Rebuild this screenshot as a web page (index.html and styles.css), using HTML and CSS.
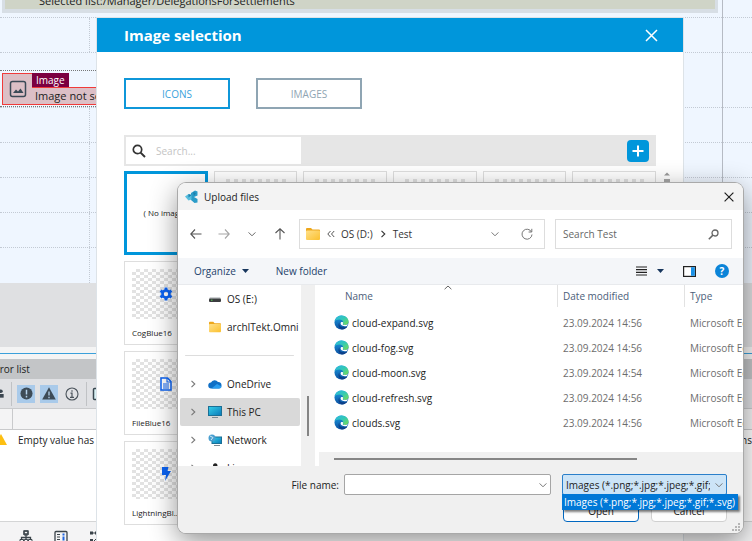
FILE: index.html
```html
<!DOCTYPE html>
<html lang="en">
<head>
    <meta charset="UTF-8">
    <meta name="viewport" content="width=device-width, initial-scale=1">
    <title>Image selection</title>
    <link rel="stylesheet" href="styles.css">
</head>
<body>
    <svg class="defs" width="0" height="0" aria-hidden="true">
        <defs>
            <linearGradient id="edgeBlue" x1="0" y1="0" x2="0" y2="1">
                <stop offset="0" stop-color="#1b9de2"/>
                <stop offset="1" stop-color="#0c4fa0"/>
            </linearGradient>
            <linearGradient id="edgeGreen" x1="0" y1="0" x2="1" y2="1">
                <stop offset="0" stop-color="#28b5e4"/>
                <stop offset="0.5" stop-color="#35c9b4"/>
                <stop offset="1" stop-color="#7be04a"/>
            </linearGradient>
            <linearGradient id="folderFill" x1="0" y1="0" x2="1" y2="1">
                <stop offset="0" stop-color="#ffe08a"/>
                <stop offset="1" stop-color="#fbc02e"/>
            </linearGradient>
            <linearGradient id="screenFill" x1="0" y1="0" x2="1" y2="1">
                <stop offset="0" stop-color="#35d0ea"/>
                <stop offset="1" stop-color="#0a78b8"/>
            </linearGradient>
            <symbol id="edge" viewBox="0 0 16 16">
                <circle cx="8" cy="8" r="7.5" fill="url(#edgeBlue)"/>
                <path d="M.7 6.500C1.600 2.500 4.500.5 8 .5c4.500 0 7.500 3.200 7.500 6.500 0 2.400-1.700 3.700-3.700 3.700-1.500 0-2.600-.5-2.600-1 0-.4.6-.8.6-1.900C9.800 6 8.200 4.700 5.700 4.700 3.500 4.700 1.600 5.500.7 6.500z" fill="url(#edgeGreen)"/>
                <path d="M5.800 8c-.8 3.600 2 6.800 8.500 4.300-1 1.700-3.200 3.100-5.200 3.200C5.500 14.800 3.500 11 5.800 8z" fill="#0b3f88"/>
                <path d="M7.300 8c.8-.9 2.400-.6 2.500.3 0 .6-.5 1-.5 1.400 0 .6 1.200 1 2.500 1 1.200 0 2.200-.4 3-1.100-.2.900-.6 1.500-1 2C9.500 12.800 6.200 10.500 7.300 8z" fill="#fff"/>
            </symbol>
            <symbol id="folder" viewBox="0 0 16 14">
                <path d="M1 2a1 1 0 0 1 1-1h4l1.500 1.500H14a1 1 0 0 1 1 1V6H1z" fill="#eda71c"/>
                <rect x="1" y="3.500" width="14" height="9.500" rx="1" fill="url(#folderFill)"/>
            </symbol>
            <symbol id="chevron-right" viewBox="0 0 8 8">
                <path d="M2.500 .8L5.800 4 2.500 7.200" fill="none" stroke="currentColor" stroke-width="1.100"/>
            </symbol>
            <symbol id="chevron-down" viewBox="0 0 8 8">
                <path d="M.6 2.400L4 5.800l3.400-3.400" fill="none" stroke="currentColor"/>
            </symbol>
        </defs>
    </svg>

    <div class="designer">
        <div class="canvas">
            <div class="sheet">
                <div class="list-block">
                    <div class="list-caption">Selected list:/Manager/DelegationsForSettlements</div>
                </div>
                <div class="grid-row thin"></div>
                <div class="grid-row"><i></i><i></i><i></i></div>
                <div class="grid-row component-row">
                    <div class="image-component">
                        <div class="image-thumb">
                            <svg width="18" height="18" viewBox="0 0 18 18"><rect x="1.500" y="1.500" width="15" height="15" rx="2" fill="none" stroke="#3b4a57" stroke-width="1.500"/><path d="M4 13l3-3.500 2 2 2.500-3L14.500 13z" fill="#3b4a57"/></svg>
                        </div>
                        <div class="image-info">
                            <span class="image-tag">Image</span>
                            <span class="image-text">Image not selected</span>
                        </div>
                    </div>
                </div>
                <div class="grid-row"><i></i><i></i><i></i></div>
                <div class="grid-row"><i></i><i></i><i></i></div>
                <div class="grid-row"><i></i><i></i><i></i></div>
                <div class="grid-row"><i></i><i></i><i></i></div>
                <div class="grid-row last"><i></i><i></i><i></i></div>
            </div>
            <div class="sheet side">
                <div class="side-top"></div>
                <div class="grid-row thin"></div>
                <div class="grid-row"></div>
                <div class="grid-row component-row"></div>
                <div class="grid-row"></div>
                <div class="grid-row"></div>
                <div class="grid-row"></div>
                <div class="grid-row"></div>
                <div class="grid-row last"></div>
            </div>
        </div>
        <div class="canvas-end"></div>
        <div class="splitter"></div>
        <section class="errors">
            <h2 class="errors-title">Error list</h2>
            <div class="errors-toolbar">
                <svg class="tool-user" width="12" height="18" viewBox="0 0 12 18"><circle cx="1" cy="6" r="2" fill="#3b4650"/><path d="M0 9h4v4H0z" fill="#3b4650"/></svg>
                <button class="tool active" aria-label="Errors">
                    <svg width="13" height="13" viewBox="0 0 14 14"><circle cx="7" cy="7" r="6.500" fill="#3d4b57"/><path d="M7 3v5M7 9.500v1.700" stroke="#b5d2ec" stroke-width="1.600"/></svg>
                </button>
                <button class="tool active" aria-label="Warnings">
                    <svg width="14" height="13" viewBox="0 0 14 13"><path d="M7 .3L13.800 12.500H.2z" fill="#3d4b57"/><path d="M7 4.500v4M7 9.700v1.500" stroke="#b5d2ec" stroke-width="1.300"/></svg>
                </button>
                <button class="tool" aria-label="Messages">
                    <svg width="14" height="14" viewBox="0 0 14 14"><circle cx="7" cy="7" r="6" fill="none" stroke="#4a535b" stroke-width="1.100"/><path d="M7 3.300v1.400M5.500 6.200H7v4M5 10.300h4" stroke="#4a535b" stroke-width="1.200" fill="none"/></svg>
                </button>
                <span class="tool-extra">
                    <svg width="14" height="14" viewBox="0 0 14 14"><rect x="1.500" y="1.500" width="11" height="11" rx="1" fill="#d8f0f3" stroke="#39474f" stroke-width="1.500"/><path d="M4 5h4M4 7h4M4 9h4" stroke="#1aa0b4"/></svg>
                </span>
            </div>
            <div class="errors-head"></div>
            <div class="error-row">
                <svg width="18" height="14" viewBox="0 0 18 14"><path d="M1 1L7 12H-6z" fill="#fdbf12"/></svg>
                <span>Empty value has</span>
                <span class="error-end">ns</span>
            </div>
        </section>
        <div class="status">
            <svg width="14" height="14" viewBox="0 0 14 14"><path d="M5 1h4v4H5zM1 9.500h3.500V13H1zM5.300 9.500h3.400V13H5.300zM9.500 9.500H13V13H9.500z" fill="none" stroke="#3b444b"/><path d="M5 1h4v3H5zM7 4v5M2.500 9.500v-2h9v2" fill="none" stroke="#3b444b" stroke-width="1.300"/></svg>
            <svg width="14" height="14" viewBox="0 0 14 14"><rect x="1" y="1.500" width="12" height="11" rx="1" fill="none" stroke="#3b444b" stroke-width="1.300"/><path d="M3 4.500h3M3 7h3M3 9.500h3" stroke="#3b444b"/><path d="M9.500 3.500v2M9.500 6.500v4" stroke="#1e64e0" stroke-width="2"/></svg>
            <svg width="14" height="14" viewBox="0 0 14 14"><path d="M1 1.500h3v3H1zM6 1.500h3v3H6zM1 9h3v3H1z" fill="#3b444b"/><path d="M4 3h2M8 8l-3 3 3 3" stroke="#3b444b" fill="none"/></svg>
        </div>
    </div>

    <div class="selection" role="dialog" aria-labelledby="selectionTitle">
        <header class="selection-header">
            <h1 id="selectionTitle">Image selection</h1>
            <button class="close" aria-label="Close">
                <svg width="13" height="13" viewBox="0 0 13 13"><path d="M1 1l11 11M12 1L1 12" stroke="#fff" stroke-width="1.500"/></svg>
            </button>
        </header>
        <div class="selection-body">
            <div class="tabs">
                <button class="tab selected">ICONS</button>
                <button class="tab">IMAGES</button>
            </div>
            <div class="search-bar">
                <label class="search-field">
                    <svg width="14" height="14" viewBox="0 0 14 14"><circle cx="5.500" cy="5.500" r="4.200" fill="none" stroke="#333" stroke-width="1.700"/><path d="M8.600 8.600l4.400 4.400" stroke="#333" stroke-width="2"/></svg>
                    <input type="text" placeholder="Search..." aria-label="Search icons">
                </label>
                <button class="add" aria-label="Add">
                    <svg width="12" height="12" viewBox="0 0 12 12"><path d="M6 .5v11M.5 6h11" stroke="#fff" stroke-width="2"/></svg>
                </button>
            </div>
            <div class="gallery">
                <div class="tiles">
                    <div class="tile none">( No image )</div>
                    <div class="tile"><div class="preview"></div></div>
                    <div class="tile"><div class="preview"></div></div>
                    <div class="tile"><div class="preview"></div></div>
                    <div class="tile"><div class="preview"></div></div>
                    <div class="tile"><div class="preview"></div></div>
                    <div class="tile first">
                        <div class="preview">
                            <svg width="14" height="14" viewBox="0 0 14 14"><circle cx="7" cy="7" r="3.500" fill="none" stroke="#0b63f3" stroke-width="2.600"/><path d="M7 .5v2.500M7 11v2.500M1.400 3.700l2.200 1.300M10.400 9l2.200 1.300M1.400 10.300L3.600 9M10.400 5l2.200-1.300" stroke="#0b63f3" stroke-width="3"/></svg>
                        </div>
                        CogBlue16
                    </div>
                    <div class="tile first">
                        <div class="preview">
                            <svg width="12" height="14" viewBox="0 0 12 14"><path d="M1 1h6.500L11 4.500V13H1z" fill="#fff" stroke="#0b63f3" stroke-width="1.500"/><path d="M7 1v4h4M3 7h6M3 9h6M3 11h6" fill="none" stroke="#0b63f3" stroke-width="1.100"/></svg>
                        </div>
                        FileBlue16
                    </div>
                    <div class="tile first">
                        <div class="preview">
                            <svg width="12" height="14" viewBox="0 0 12 14"><path d="M2 0h6.500L7.500 4H11L5 14l1-6H2z" fill="#0b63f3"/></svg>
                        </div>
                        LightningBl...
                    </div>
                </div>
                <div class="gallery-scroll">
                    <svg width="6" height="4" viewBox="0 0 6 4"><path d="M3 .5L6 3.500H0z" fill="#9a9a9a"/></svg>
                    <div class="gallery-thumb"></div>
                </div>
            </div>
        </div>
    </div>

    <div class="upload" role="dialog" aria-labelledby="uploadTitle">
        <header class="upload-title">
            <svg width="14" height="14" viewBox="0 0 14 14"><path d="M6 3l4-2.500 2.500 1v4L9 7l3.500 2v3.500L9.500 13 6 10z" fill="#2b9cc8"/><path d="M0 6.500L3.500 4l3 1v4.500l-3 1z" fill="#58bede"/><path d="M3.500 4l3 1-3 2.500zM8 2l3 1-2 3z" fill="#1b7fae"/></svg>
            <h2 id="uploadTitle">Upload files</h2>
            <button class="close" aria-label="Close">
                <svg width="10" height="10" viewBox="0 0 10 10"><path d="M.6.6l8.800 8.800M9.400.6L.6 9.400" stroke="#222" stroke-width="1.200"/></svg>
            </button>
        </header>

        <nav class="upload-nav">
            <div class="history">
                <button aria-label="Back"><svg width="12" height="12" viewBox="0 0 12 12"><path d="M11.500 6H1M5 1.500L.8 6 5 10.500" fill="none" stroke="#555" stroke-width="1.100"/></svg></button>
                <button aria-label="Forward"><svg width="12" height="12" viewBox="0 0 12 12"><path d="M.5 6H11M7 1.500L11.200 6 7 10.500" fill="none" stroke="#a5a5a5" stroke-width="1.100"/></svg></button>
                <button aria-label="Recent"><svg width="8" height="8"><use href="#chevron-down"/></svg></button>
                <button aria-label="Up"><svg width="12" height="12" viewBox="0 0 12 12"><path d="M6 11.500V1M1.500 5L6 .8 10.500 5" fill="none" stroke="#555" stroke-width="1.100"/></svg></button>
            </div>
            <div class="address">
                <svg width="16" height="14"><use href="#folder"/></svg>
                <svg width="8" height="8" viewBox="0 0 8 8"><path d="M3.500 1L.8 4l2.700 3M7.200 1L4.500 4l2.700 3" fill="none" stroke="#555"/></svg>
                <button>OS (D:)</button>
                <svg width="8" height="8"><use href="#chevron-right"/></svg>
                <button>Test</button>
                <svg class="address-drop" width="8" height="8"><use href="#chevron-down"/></svg>
                <button class="refresh" aria-label="Refresh"><svg width="12" height="12" viewBox="0 0 12 12"><path d="M10.500 4A5 5 0 1 0 11 6.500M10.800 .8V4H7.600" fill="none" stroke="#777"/></svg></button>
            </div>
            <label class="find">
                <input type="text" placeholder="Search Test" aria-label="Search Test">
                <svg width="11" height="11" viewBox="0 0 11 11"><circle cx="7" cy="4" r="3" fill="none" stroke="#666" stroke-width="1.300"/><path d="M4.900 6.100L.8 10.200" stroke="#666" stroke-width="1.500"/></svg>
            </label>
        </nav>

        <div class="commands">
            <button>Organize <svg width="7" height="4" viewBox="0 0 7 4"><path d="M0 0h7L3.500 4z" fill="#17365d"/></svg></button>
            <button>New folder</button>
            <div class="views">
                <button aria-label="Change view"><svg width="11" height="10" viewBox="0 0 11 10"><path d="M0 1h11M0 3.700h11M0 6.300h11M0 9h11" stroke="#222" stroke-width="1.200"/></svg></button>
                <button aria-label="More views"><svg width="7" height="4" viewBox="0 0 7 4"><path d="M0 0h7L3.500 4z" fill="#17365d"/></svg></button>
                <button aria-label="Preview pane"><svg width="13" height="11" viewBox="0 0 13 11"><rect x=".6" y=".6" width="11.800" height="9.800" fill="#fff" stroke="#222" stroke-width="1.200"/><path d="M8 1.200h3.800v8.600H8z" fill="#1a92e8"/></svg></button>
                <button class="help" aria-label="Help">?</button>
            </div>
        </div>

        <div class="browser">
            <ul class="places">
                <li><span class="twisty"></span><svg width="14" height="12" viewBox="0 0 14 12"><path d="M2 4h10l1 2H1z" fill="#cfd2d4"/><rect x="1" y="5.500" width="12" height="3.500" rx="1" fill="#3b3d3f"/><path d="M3 7.200h1.500" stroke="#5ad15a"/></svg>OS (E:)</li>
                <li><span class="twisty"></span><svg width="14" height="12"><use href="#folder"/></svg>archITekt.Omni</li>
                <li class="divider" role="separator"></li>
                <li><span class="twisty"><svg width="8" height="8"><use href="#chevron-right"/></svg></span><svg width="14" height="12" viewBox="0 0 14 12"><path d="M3.500 10.500A3 3 0 0 1 3 4.500a4 4 0 0 1 7-.5 3.300 3.300 0 0 1 1 6.500z" fill="#0f6fc6"/><path d="M3.500 10.500L9 6l4.500 2.500a2 2 0 0 1-2 2z" fill="#2a9df0"/></svg>OneDrive</li>
                <li class="current"><span class="twisty"><svg width="8" height="8"><use href="#chevron-right"/></svg></span><svg width="14" height="12" viewBox="0 0 14 12"><rect x=".5" y=".5" width="13" height="9" fill="url(#screenFill)" stroke="#1b6f95"/><path d="M4 11.500h6" stroke="#7d8b94"/></svg>This PC</li>
                <li><span class="twisty"><svg width="8" height="8"><use href="#chevron-right"/></svg></span><svg width="14" height="12" viewBox="0 0 14 12"><rect x="4" y="3" width="9.500" height="6.500" fill="url(#screenFill)" stroke="#1b6f95"/><path d="M6 11.500h6" stroke="#7d8b94"/><circle cx="4" cy="4" r="3.500" fill="#4a9fd0"/><path d="M2 2l3 1.500L3 6" fill="none" stroke="#cfe9f5"/></svg>Network</li>
                <li><span class="twisty"><svg width="8" height="8"><use href="#chevron-right"/></svg></span><svg width="14" height="12" viewBox="0 0 14 12"><path d="M5 4a2.200 2.700 0 0 1 4.500 0c0 2 2.500 4 2 7H3c0-3 2-5 2-7z" fill="#222"/><path d="M6 4.500h2.500L7.300 6z" fill="#f5b21a"/></svg>Linux</li>
            </ul>
            <div class="places-scroll"><div class="places-thumb"></div></div>
            <div class="files">
                <svg class="sort-mark" width="8" height="5" viewBox="0 0 8 5"><path d="M.6 4.200L4 1l3.400 3.200" fill="none" stroke="#666"/></svg>
                <div class="files-view">
                    <table>
                        <thead>
                            <tr><th class="name">Name</th><th class="date"><span>Date modified</span></th><th><span>Type</span></th></tr>
                        </thead>
                        <tbody>
                            <tr><td class="name"><svg width="15" height="15"><use href="#edge"/></svg>cloud-expand.svg</td><td>23.09.2024 14:56</td><td>Microsoft Edge</td></tr>
                            <tr><td class="name"><svg width="15" height="15"><use href="#edge"/></svg>cloud-fog.svg</td><td>23.09.2024 14:56</td><td>Microsoft Edge</td></tr>
                            <tr><td class="name"><svg width="15" height="15"><use href="#edge"/></svg>cloud-moon.svg</td><td>23.09.2024 14:54</td><td>Microsoft Edge</td></tr>
                            <tr><td class="name"><svg width="15" height="15"><use href="#edge"/></svg>cloud-refresh.svg</td><td>23.09.2024 14:56</td><td>Microsoft Edge</td></tr>
                            <tr><td class="name"><svg width="15" height="15"><use href="#edge"/></svg>clouds.svg</td><td>23.09.2024 14:56</td><td>Microsoft Edge</td></tr>
                        </tbody>
                    </table>
                </div>
                <div class="files-scroll"><div class="files-thumb"></div></div>
            </div>
        </div>

        <footer class="upload-footer">
            <div class="footer-row">
                <label for="fileName">File name:</label>
                <div class="combo file-name">
                    <input type="text" id="fileName">
                    <svg width="8" height="8"><use href="#chevron-down"/></svg>
                </div>
                <div class="combo file-type">
                    <select aria-label="File type">
                        <option>Images (*.png;*.jpg;*.jpeg;*.gif;*.svg)</option>
                    </select>
                    <svg width="8" height="8"><use href="#chevron-down"/></svg>
                    <div class="type-menu">Images (*.png;*.jpg;*.jpeg;*.gif;*.svg)</div>
                </div>
            </div>
            <div class="footer-buttons">
                <button class="default">Open</button>
                <button>Cancel</button>
            </div>
            <svg class="grip" width="8" height="8" viewBox="0 0 8 8"><path d="M6 0h2v2H6zM3 3h2v2H3zM6 3h2v2H6zM0 6h2v2H0zM3 6h2v2H3zM6 6h2v2H6z" fill="#b5b5b5"/></svg>
        </footer>
    </div>
</body>
</html>
```

FILE: styles.css
```css
* { box-sizing: border-box; }
body {
    font-family: 'Open Sans', 'Noto Sans', sans-serif;
    font-size: 10px;
    line-height: 16px;
    margin: 0;
    height: 100vh;
    overflow: hidden;
    color: #222;
    background: #fff;
    position: relative;
}
h1, h2, ul {
    margin: 0;
    padding: 0;
    font-size: inherit;
    font-weight: normal;
}
button, input, select {
    font: inherit;
    color: inherit;
    margin: 0;
    padding: 0;
    border: none;
    border-radius: 0;
    background: none;
    outline: none;
}
svg {
    display: block;
    flex: none;
}
.defs { position: absolute; }

/* form designer in the background */
.designer {
    display: flex;
    flex-direction: column;
    height: 100vh;
}
.canvas {
    display: flex;
    background: #eff6ff;
    overflow: hidden;
}
.sheet {
    flex: 1;
    min-width: 0;
    border-right: 1px solid #b6bbc4;
}
.sheet.side {
    flex: 0 0 29px;
    border-right: none;
}
.list-block {
    height: 13px;
    margin: 0 4px 0 2px;
    padding: 0 3px 4px;
    background: #d7dee5;
}
.list-caption {
    display: flex;
    align-items: flex-end;
    height: 9px;
    padding-left: 34px;
    overflow: hidden;
    font-size: 11px;
    background: #cfd4c7;
}
.side-top { height: 13px; }
.grid-row {
    display: flex;
    height: 35px;
    border-bottom: 1px dotted #c3cad4;
}
.grid-row i {
    flex: 0 0 90px;
    border-right: 1px dotted #c3cad4;
}
.grid-row.thin { height: 5px; }
.grid-row.component-row {
    height: 55px;
    padding-top: 17px;
}
.grid-row.last { border-bottom: none; }
.image-component {
    display: flex;
    width: 240px;
    padding: 2px 0 1px 2px;
    border-top: 1px dotted #777;
    border-bottom: 1px dotted #777;
}
.image-thumb {
    display: flex;
    align-items: center;
    width: 30px;
    padding-left: 6px;
    background: #dcbfc6;
    border: 1px solid #f03a3a;
    border-right: none;
}
.image-info {
    display: flex;
    flex: 1;
    flex-direction: column;
    align-items: flex-start;
}
.image-tag {
    height: 14px;
    padding: 0 4px;
    line-height: 15px;
    color: #fff;
    background: #7b0040;
}
.image-text {
    align-self: stretch;
    flex: 1;
    padding-left: 3px;
    font-size: 11px;
    background: #dcbfc6;
    border-top: 1px solid #f03a3a;
    border-bottom: 1px solid #f03a3a;
}
.canvas-end {
    height: 64px;
    background: #dfe0e2;
}
.splitter {
    height: 12px;
    padding-top: 6px;
    background: #f4f4f4;
}
.splitter::before {
    content: "";
    display: block;
    height: 1px;
    background: #3ba0da;
}
.errors {
    flex: 1;
    background: #fff;
}
.errors-title {
    height: 20px;
    line-height: 20px;
    text-indent: -10px;
    overflow: hidden;
    background: #c3c5c7;
}
.errors-toolbar {
    display: flex;
    align-items: center;
    height: 29px;
    gap: 5px;
    background: #e0e1e4;
}
.tool-user {
    height: 24px;
    border-right: 1px solid #c0c2c5;
}
.tool {
    display: flex;
    align-items: center;
    justify-content: center;
    width: 18px;
    height: 18px;
}
.tool.active { background: #a9caea; }
.tool-extra {
    display: flex;
    align-items: center;
    height: 24px;
    padding-left: 5px;
    border-left: 1px solid #c0c2c5;
}
.errors-head {
    height: 22px;
    padding-left: 12px;
    background: #f4f4f5;
    border-top: 1px solid #c9cacc;
    border-bottom: 1px solid #c9cacc;
}
.errors-head::before {
    content: "";
    display: block;
    width: 1px;
    height: 20px;
    background: #c9cacc;
}
.error-row {
    display: flex;
    align-items: center;
    height: 20px;
}
.error-end { margin-left: auto; }
.status {
    display: flex;
    height: 20px;
    padding: 8px 0 0 19px;
    gap: 21px;
    overflow: hidden;
    background: #f4f4f5;
    border-top: 1px solid #d4d5d6;
}

/* image selection dialog */
.selection {
    position: absolute;
    top: 18px;
    bottom: 0;
    left: 97px;
    right: 69px;
    background: #fff;
    box-shadow: 0 0 0 1px #dde3e8;
}
.selection-header {
    display: flex;
    align-items: center;
    justify-content: space-between;
    height: 34px;
    padding: 0 25px 0 27px;
    color: #fff;
    background: #0096db;
}
.selection-header h1 {
    font-size: 15px;
    font-weight: bold;
}
.selection-body { padding: 26px 13px 0 27px; }
.tabs {
    display: flex;
    gap: 26px;
    margin-bottom: 26px;
}
.tab {
    width: 106px;
    height: 31px;
    color: #8fa5b3;
    border: 2px solid #8fa5b3;
}
.tab.selected {
    color: #3ba3dc;
    border-color: #0f97d9;
}
.search-bar {
    display: flex;
    align-items: center;
    justify-content: space-between;
    height: 31px;
    margin-right: 14px;
    padding-right: 7px;
    background: #e6e6e6;
}
.search-field {
    display: flex;
    align-items: center;
    gap: 10px;
    width: 179px;
    height: 31px;
    padding-left: 6px;
    background: #fff;
    border: 2px solid #e6e6e6;
}
.search-field input {
    flex: 1;
    min-width: 0;
}
.search-field input::placeholder { color: #c4c4c4; }
.add {
    display: flex;
    align-items: center;
    justify-content: center;
    width: 22px;
    height: 22px;
    background: #0096db;
    border-radius: 4px;
}
.gallery {
    display: flex;
    gap: 8px;
    margin-top: 5px;
}
.tiles {
    display: grid;
    flex: 1;
    grid-template-columns: repeat(6, 1fr);
    gap: 6px;
}
.tile {
    height: 84px;
    padding: 7px;
    overflow: hidden;
    font-size: 8px;
    white-space: nowrap;
    border: 1px solid #dedede;
}
.tile.none {
    display: flex;
    align-items: center;
    justify-content: center;
    padding: 0;
    border: 3px solid #0096db;
}
.tile.first { grid-column: 1; }
.preview {
    display: flex;
    align-items: center;
    justify-content: center;
    height: 50px;
    margin-bottom: 6px;
    background: repeating-conic-gradient(#e2e2e2 0% 25%, #fff 0% 50%) 0 0 / 8px 6px;
}
.gallery-scroll {
    display: flex;
    flex-direction: column;
    align-items: center;
    width: 6px;
    padding-top: 1px;
    gap: 3px;
}
.gallery-thumb {
    width: 6px;
    height: 90px;
    background: #a8a8a8;
}

/* upload files window */
.upload {
    position: absolute;
    top: 183px;
    left: 178px;
    right: 9px;
    overflow: hidden;
    background: #fff;
    border-radius: 8px;
    box-shadow: 0 0 0 1px #a9a9a9, 0 8px 28px rgba(0, 0, 0, 0.45);
}
.upload-title {
    display: flex;
    align-items: center;
    gap: 5px;
    height: 27px;
    padding: 0 9px 0 7px;
    background: #f3f3f3;
}
.upload-title .close { margin-left: auto; }
.upload-nav {
    display: flex;
    align-items: center;
    gap: 10px;
    height: 48px;
    padding: 0 11px 0 12px;
}
.history {
    display: flex;
    align-items: center;
    gap: 16px;
    margin-right: 3px;
    color: #666;
}
.history button {
    display: flex;
    justify-content: center;
    width: 12px;
}
.address {
    display: flex;
    flex: 1;
    align-items: center;
    gap: 6px;
    height: 30px;
    padding: 0 11px 0 5px;
    color: #333;
    border: 1px solid #ddd;
}
.address-drop {
    margin-left: auto;
    margin-right: 16px;
    color: #777;
}
.find {
    display: flex;
    align-items: center;
    width: 177px;
    height: 30px;
    padding: 0 12px 0 7px;
    border: 1px solid #ddd;
}
.find input {
    flex: 1;
    min-width: 0;
}
.find input::placeholder { color: #666; }
.commands {
    display: flex;
    align-items: center;
    gap: 27px;
    height: 27px;
    padding: 0 14px 0 16px;
    color: #23416b;
    background: #f4f6f9;
    border-bottom: 1px solid #e8eaed;
}
.commands button {
    display: flex;
    align-items: center;
    gap: 6px;
}
.views {
    display: flex;
    align-items: center;
    gap: 19px;
    margin-left: auto;
}
.views button:first-child { margin-right: -9px; }
.commands .help {
    justify-content: center;
    width: 14px;
    height: 14px;
    font-weight: bold;
    line-height: 14px;
    color: #fff;
    background: #0b84d8;
    border-radius: 7px;
}
.browser {
    display: flex;
    height: 181px;
}
.places {
    width: 123px;
    overflow: hidden;
    list-style: none;
}
.places li {
    display: flex;
    align-items: center;
    gap: 5px;
    height: 28px;
    margin: 0 1px 0 2px;
    padding-left: 9px;
    white-space: nowrap;
    border-radius: 2px;
}
.places .twisty {
    flex: none;
    width: 14px;
    color: #777;
}
.places .current { background: #d9d9d9; }
.places .divider {
    height: 1px;
    margin: 14px 7px;
    background: #ddd;
}
.places-scroll {
    width: 14px;
    padding: 111px 6px 0;
    background: #f0f0f0;
}
.places-thumb {
    height: 40px;
    background: #858585;
}
.files {
    display: flex;
    flex: 1;
    flex-direction: column;
    min-width: 0;
    padding-left: 4px;
    position: relative;
}
.sort-mark {
    position: absolute;
    top: 0;
    left: 129px;
}
.files-view {
    flex: 1;
    overflow: hidden;
}
.files table {
    width: 480px;
    table-layout: fixed;
    border-collapse: collapse;
}
.files th {
    height: 25px;
    padding: 0;
    font-weight: normal;
    text-align: left;
    vertical-align: top;
    line-height: 22px;
    color: #4c607a;
}
.files th.name {
    width: 238px;
    padding-left: 26px;
}
.files th.date { width: 127px; }
.files th span {
    display: block;
    padding-left: 5px;
    border-left: 1px solid #e2e2e2;
}
.files td {
    height: 25px;
    padding: 0 0 0 6px;
    color: #6d6d6d;
    white-space: nowrap;
}
.files td.name {
    display: flex;
    align-items: center;
    gap: 3px;
    padding-left: 15px;
    color: #222;
}
.files-scroll {
    height: 14px;
    padding: 6px 106px 0 15px;
    background: #f0f0f0;
}
.files-thumb {
    height: 2px;
    background: #858585;
}
.upload-footer {
    display: flex;
    flex-direction: column;
    gap: 5px;
    height: 67px;
    padding: 8px 16px 0 0;
    background: #f0f0f0;
    position: relative;
}
.footer-row {
    display: flex;
    align-items: center;
    justify-content: flex-end;
}
.footer-row label { margin-right: 5px; }
.combo {
    display: flex;
    position: relative;
    height: 21px;
    color: #777;
    background: #fff;
    border: 1px solid #a5a5a5;
    border-radius: 2px;
}
.combo svg {
    position: absolute;
    top: 6px;
    right: 3px;
}
.combo input, .combo select {
    width: 100%;
    padding: 0 16px 0 3px;
    color: #222;
}
.combo select { appearance: none; }
.file-name {
    width: 207px;
    margin-right: 11px;
}
.file-type {
    width: 165px;
    background: #cce4f7;
    border-color: #2a7fca;
}
.type-menu {
    position: absolute;
    top: 19px;
    left: -1px;
    z-index: 1;
    height: 16px;
    padding: 0 3px 0 2px;
    white-space: nowrap;
    color: #fff;
    background: #0078d7;
    box-shadow: 2px 2px 2px rgba(0, 0, 0, 0.5);
}
.footer-buttons {
    display: flex;
    justify-content: flex-end;
    gap: 12px;
}
.footer-buttons button {
    width: 76px;
    height: 22px;
    background: #fdfdfd;
    border: 1px solid #d0d0d0;
    border-radius: 4px;
}
.footer-buttons .default { border-color: #0067c0; }
.grip {
    position: absolute;
    right: 3px;
    bottom: 2px;
}
```
